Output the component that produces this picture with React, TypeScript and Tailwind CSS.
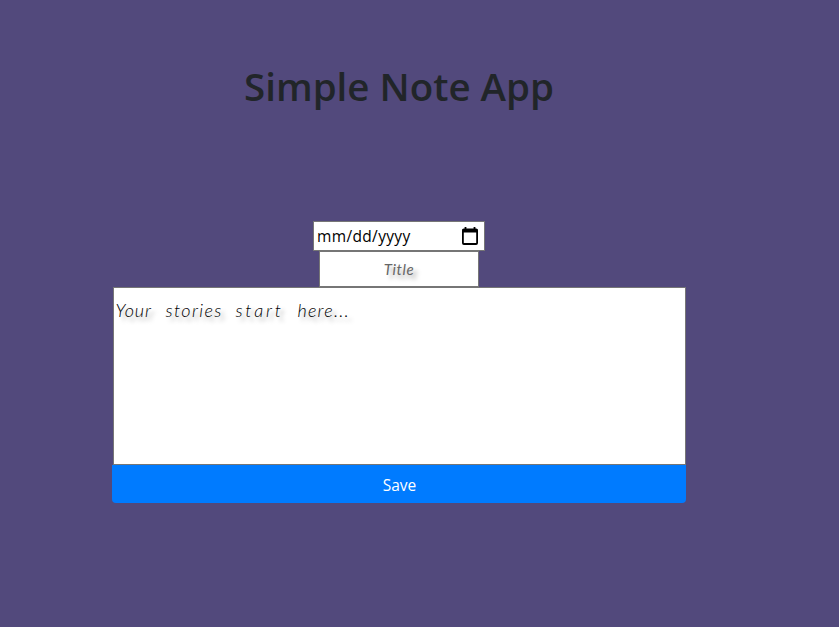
function CalendarIcon() {
  return (
    <svg width="18" height="20" viewBox="0 0 18 20" fill="none" stroke="#000" aria-hidden="true">
      <rect x="1.9" y="3.4" width="14.2" height="14.6" rx="1" strokeWidth="1.8" />
      <path d="M1.5 3.2h15v3.3h-15z" fill="#000" stroke="none" />
      <path d="M4.5 1v3M13.5 1v3" strokeWidth="1.8" />
    </svg>
  );
}

export default function App() {
  return (
    <main className="flex h-[627px] w-[839px] flex-col items-center bg-[#52497c] pr-[41px] font-['Open_Sans','Noto_Sans',sans-serif] text-[#212529]">
      <h1 className="mt-[62px] h-12 whitespace-nowrap text-[38.5px] font-[540] leading-[48px]">
        Simple Note App
      </h1>
      <form className="mt-[111px] flex w-[574px] flex-col items-center">
        <div className="flex h-[30px] w-[172px] items-center justify-between border border-[#767676] bg-white pl-[3px] pr-[5px] text-black">
          <span className="text-[15.5px] leading-6 tracking-[0.35px]">mm/dd/yyyy</span>
          <CalendarIcon />
        </div>
        <div className="flex h-9 w-[160px] items-center justify-center border border-[#767676] bg-white">
          <span className="font-['Lato',sans-serif] text-[15px] italic leading-5 tracking-[0.6px] text-[#666666] [text-shadow:4px_4px_4px_#aaaaaa]">
            Title
          </span>
        </div>
        <div className="h-[178px] w-[573px] border border-[#767676] bg-white pl-0.5 pt-[10px]">
          <p className="flex whitespace-nowrap font-['Lato',sans-serif] text-[18px] font-light italic leading-6 text-black [text-shadow:4px_4px_4px_#aaaaaa]">
            <span className="w-[50px] tracking-[0.9px]">Your </span>
            <span className="w-[70px] tracking-[1.4px]">stories </span>
            <span className="w-[62px] tracking-[2.8px]">start </span>
            <span className="tracking-[1.2px]">here...</span>
          </p>
        </div>
        <button type="button" className="h-[38px] w-full rounded-b bg-[#007bff] pl-px pt-px text-[15.5px] leading-6 text-white">
          Save
        </button>
      </form>
    </main>
  );
}
